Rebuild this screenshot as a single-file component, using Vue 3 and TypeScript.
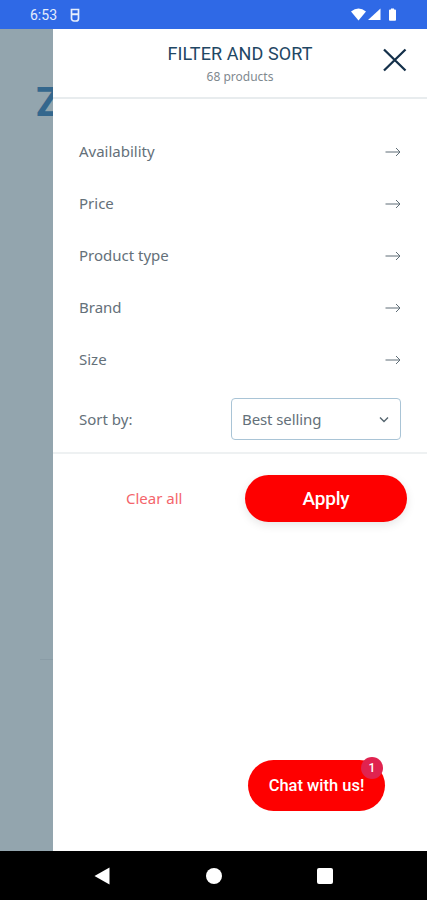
<script setup lang="ts">
const filters = ['Availability', 'Price', 'Product type', 'Brand', 'Size']
</script>

<template>
  <div class="screen">
    <div class="status-bar">
      <span class="time">6:53</span>
      <svg class="s-icon" width="12" height="16" viewBox="0 0 12 16">
        <path d="M2.5 2.5h7v4.5h-7zM2.5 7.5h7v4a2.5 2.5 0 0 1-2.5 2.5h-2a2.5 2.5 0 0 1-2.5-2.5z" fill="none" stroke="#e6eefc" stroke-width="1.7" />
      </svg>
      <span class="spacer"></span>
      <svg width="48" height="16" viewBox="0 0 48 16">
        <path d="M0 4.5Q7.5 -1.5 15 4.5L7.5 13.5z" fill="#fff" />
        <path d="M17 13L29.5 1.5V13z" fill="#fff" />
        <path d="M38 3.5q0-1 1-1h1v-1h3v1h1q1 0 1 1V13q0 .7-1 .7h-5q-1 0-1-.7z" fill="#fff" />
      </svg>
    </div>

    <div class="main">
      <div class="backdrop">
        <span class="peek">Z</span>
        <span class="peek-line"></span>
      </div>

      <div class="drawer">
        <header class="head">
          <h1>FILTER AND SORT</h1>
          <p>68 products</p>
          <button class="close" aria-label="Close">
            <svg width="26" height="26" viewBox="0 0 26 26">
              <path d="M2 2.5L23.5 23.5M23.5 2.5L2 23.5" fill="none" stroke="#14304a" stroke-width="2.3" />
            </svg>
          </button>
        </header>

        <ul class="filters">
          <li v-for="f in filters" :key="f">
            <span class="label">{{ f }}</span>
            <svg width="16" height="12" viewBox="0 0 16 12">
              <path d="M0.5 6H15M11 2l4 4-4 4" fill="none" stroke="#5f6d76" stroke-width="1" />
            </svg>
          </li>
        </ul>

        <div class="sort">
          <span>Sort by:</span>
          <div class="select">
            <span>Best selling</span>
            <svg width="10" height="7" viewBox="0 0 10 7">
              <path d="M1 1.5l4 4 4-4" fill="none" stroke="#55656f" stroke-width="1.4" />
            </svg>
          </div>
        </div>

        <div class="actions">
          <a class="clear">Clear all</a>
          <button class="apply">Apply</button>
        </div>

        <button class="chat">
          Chat with us!
          <span class="badge">1</span>
        </button>
      </div>
    </div>

    <div class="nav-bar">
      <svg width="16" height="18" viewBox="0 0 16 18"><path d="M15.5 0.5V17.5L0.5 9z" fill="#fff" /></svg>
      <span class="dot"></span>
      <span class="square"></span>
    </div>
  </div>
</template>

<style scoped>
.screen {
  width: 427px;
  height: 900px;
  display: flex;
  flex-direction: column;
  overflow: hidden;
  font-family: "Noto Sans", "Liberation Sans", sans-serif;
}
.status-bar {
  height: 29px;
  flex: none;
  background: #2f69e6;
  display: flex;
  align-items: center;
  gap: 12px;
  padding: 0 28px 0 30px;
  color: #e6eefc;
  box-sizing: border-box;
}
.time {
  font: 14px Roboto, sans-serif;
}
.spacer {
  flex: 1;
}
.main {
  flex: 1;
  display: flex;
  min-height: 0;
}
.backdrop {
  width: 53px;
  flex: none;
  background: #93a5ae;
  position: relative;
  overflow: hidden;
}
.peek {
  position: absolute;
  left: 36px;
  top: 50px;
  font: 700 40px "Roboto", sans-serif;
  color: #34678d;
}
.peek-line {
  position: absolute;
  left: 40px;
  right: 0;
  top: 630px;
  height: 1px;
  background: #8a9ca6;
}
.drawer {
  flex: 1;
  background: #fff;
  position: relative;
}
.head {
  height: 70px;
  box-sizing: border-box;
  border-bottom: 2px solid #e8ecee;
  text-align: center;
  padding-top: 13px;
  position: relative;
}
.head h1 {
  margin: 0;
  font: 400 18px/24px Roboto, sans-serif;
  color: #1f4764;
  letter-spacing: 0.1px;
}
.head p {
  margin: 3px 0 0;
  font-size: 12px;
  line-height: 16px;
  color: #7f898f;
}
.close {
  position: absolute;
  right: 19px;
  top: 18px;
  padding: 0;
  border: 0;
  background: none;
  display: flex;
}
.filters {
  list-style: none;
  margin: 0;
  padding: 27px 26px 0;
}
.filters li {
  height: 52px;
  display: flex;
  align-items: center;
  justify-content: space-between;
  font-size: 15px;
  color: #647079;
}
.label {
  padding-bottom: 2px;
}
.sort {
  display: flex;
  align-items: center;
  justify-content: space-between;
  padding: 12px 26px 12px;
  border-bottom: 2px solid #eef1f2;
  font-size: 15px;
  color: #647079;
}
.select {
  width: 170px;
  height: 42px;
  box-sizing: border-box;
  border: 1px solid #a9c4d6;
  border-radius: 4px;
  display: flex;
  align-items: center;
  justify-content: space-between;
  padding: 0 11px 0 10px;
  letter-spacing: -0.1px;
}
.actions {
  display: flex;
  align-items: center;
  justify-content: space-between;
  padding: 21px 20px 0 73px;
}
.clear {
  font-size: 15px;
  color: #f4656b;
  padding-bottom: 2px;
}
.apply {
  width: 162px;
  height: 47px;
  border: 0;
  border-radius: 24px;
  background: #fe0000;
  color: #fff;
  font: 500 19px "Roboto", sans-serif;
  letter-spacing: -0.2px;
  box-shadow: 0 3px 10px rgba(0, 0, 0, 0.1);
}
.chat {
  position: absolute;
  right: 42px;
  top: 731px;
  width: 137px;
  height: 51px;
  border: 0;
  border-radius: 26px;
  background: #fe0000;
  color: #fff;
  font: 500 16.5px Roboto, sans-serif;
}
.badge {
  position: absolute;
  right: 2px;
  top: -3px;
  width: 22px;
  height: 22px;
  border-radius: 50%;
  background: #e0234f;
  font: 500 12px/22px Roboto, sans-serif;
  text-align: center;
}
.nav-bar {
  height: 49px;
  flex: none;
  background: #000;
  display: flex;
  align-items: center;
  padding: 0 0 0 94px;
  gap: 95px;
}
.dot {
  width: 16px;
  height: 16px;
  margin-left: 1px;
  border-radius: 50%;
  background: #fff;
}
.square {
  width: 16px;
  height: 16px;
  border-radius: 2px;
  background: #fff;
}
</style>
